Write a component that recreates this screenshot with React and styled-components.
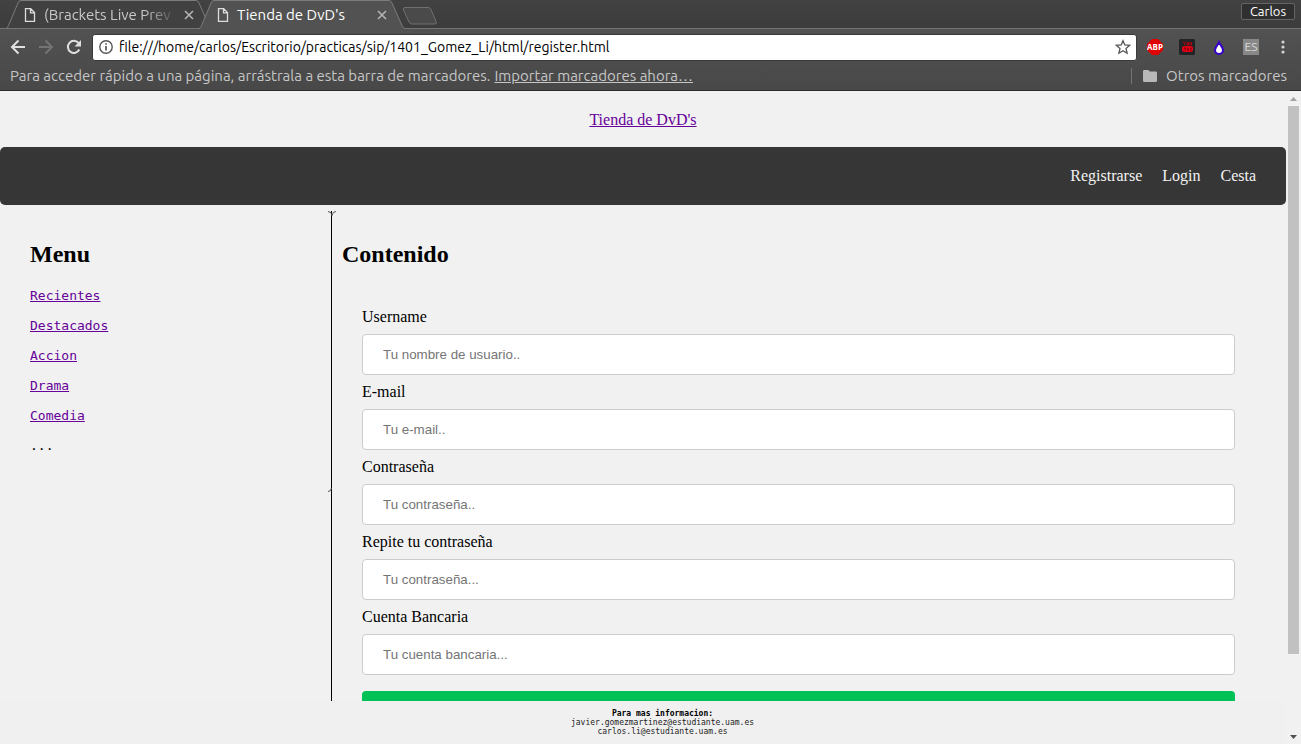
import React from "react";
import styled, { createGlobalStyle } from "styled-components";

const GlobalStyle = createGlobalStyle`
  * { box-sizing: border-box; }
  body { margin: 0; background: #f1f1f1; overflow: hidden; }
  button { border: 0; padding: 0; background: none; font: inherit; color: inherit; }
  svg { display: block; flex: none; }
`;

const uiFont = `"Ubuntu", "Noto Sans", "Open Sans", sans-serif`;
const serif = `"Liberation Serif", "Times New Roman", serif`;
const mono = `"DejaVu Sans Mono", monospace`;

const Window = styled.div`
  display: flex;
  flex-direction: column;
  height: 100vh;
`;

const Chrome = styled.header`
  flex: none;
  font-family: ${uiFont};
  font-size: 15px;
  color: #c6c6c6;
  border-bottom: 1px solid #2e2a2e;
`;

const TabStrip = styled.div`
  display: flex;
  align-items: flex-start;
  height: 29px;
  padding-left: 6px;
  background: linear-gradient(#424242, #3c3c3c);
  border-bottom: 1px solid #747474;
`;

const Tab = styled.div`
  position: relative;
  z-index: ${(p) => (p.$active ? 1 : 0)};
  display: flex;
  align-items: center;
  width: 206px;
  height: 29px;
  margin-right: -13px;
  padding: 0 16px 0 18px;
  color: ${(p) => (p.$active ? "#ffffff" : "#c9c9c9")};
`;

const TabShape = styled.svg`
  position: absolute;
  inset: 0;
  width: 100%;
  height: 100%;
  z-index: -1;
`;

const TabTitle = styled.span`
  flex: 1;
  margin: 0 4px 0 8px;
  overflow: hidden;
  white-space: nowrap;
  line-height: 28px;
  mask-image: ${(p) => (p.$fade ? "linear-gradient(90deg, #000 75%, transparent)" : "none")};
`;

const TabClose = styled.button`
  display: grid;
  place-items: center;
  width: 14px;
  height: 28px;
`;

const NewTab = styled.button`
  margin: 7px 0 0 10px;
`;

const UserButton = styled.button`
  margin: 3px 6px 0 auto;
  width: 54px;
  height: 17px;
  border: 1px solid #656565;
  border-radius: 2px;
  background: #303030;
  color: #ffffff;
  font-size: 13px;
  line-height: 15px;
`;

const Toolbar = styled.div`
  display: flex;
  align-items: center;
  height: 36px;
  padding: 0 10px;
  background: linear-gradient(#525252, #4c4c4c);
`;

const ToolButton = styled.button`
  display: grid;
  place-items: center;
  width: 16px;
  height: 24px;
  margin-right: ${(p) => p.$gap || 0}px;
`;

const Address = styled.div`
  display: flex;
  flex: 1;
  align-items: center;
  height: 27px;
  padding: 0 5px 0 6px;
  border: 1px solid #3a3a3a;
  border-radius: 3px;
  background: #ffffff;
`;

const AddressInput = styled.input`
  flex: 1;
  min-width: 0;
  padding: 0 6px;
  border: 0;
  outline: 0;
  background: none;
  color: #000000;
  font-family: ${uiFont};
  font-size: 14px;
`;

const Extensions = styled.div`
  display: flex;
  align-items: center;
  gap: 16px;
  padding-left: 10px;
`;

const LanguageBadge = styled.button`
  width: 16px;
  height: 16px;
  background: #888888;
  color: #d8d8d8;
  font-size: 12px;
  line-height: 16px;
`;

const Bookmarks = styled.div`
  display: flex;
  align-items: center;
  height: 25px;
  padding: 0 14px 4px 10px;
  background: linear-gradient(#4c4c4c, #484848);
  white-space: nowrap;
`;

const ImportLink = styled.a`
  margin-left: 4px;
  color: inherit;
`;

const OtherBookmarks = styled.button`
  display: flex;
  align-items: center;
  gap: 9px;
  margin-left: auto;
  padding-left: 11px;
  border-left: 1px solid #747474;
  line-height: 16px;
`;

const Viewport = styled.div`
  display: flex;
  flex: 1;
  min-height: 0;
`;

const Page = styled.div`
  display: flex;
  flex-direction: column;
  flex: 1;
  min-width: 0;
  background: #f1f1f1;
  color: #000000;
  font-family: ${serif};
  font-size: 16px;
  line-height: 18px;
`;

const Content = styled.div`
  flex: 1;
  min-height: 0;
  overflow: hidden;
`;

const SiteTitle = styled.div`
  padding: 20px 0 18px;
  text-align: center;
`;

const VisitedLink = styled.a`
  color: #660099;
`;

const Nav = styled.nav`
  display: flex;
  justify-content: flex-end;
  gap: 20px;
  padding: 20px 30px;
  border-radius: 5px;
  background: #363636;
`;

const NavLink = styled.a`
  color: #f2f2f2;
  text-decoration: none;
`;

const Columns = styled.div`
  display: flex;
  padding-top: 6px;
`;

const Sidebar = styled.aside`
  position: relative;
  width: 331px;
  height: 281px;
  padding: 30px;
`;

const CornerMark = styled.svg`
  position: absolute;
  right: -5px;
  ${(p) => (p.$bottom ? "bottom: 0;" : "top: 0;")}
`;

const Main = styled.main`
  flex: 1;
  padding: 30px 51px 30px 10px;
  border-left: 1px solid #000000;
`;

const Heading = styled.h2`
  margin: 0;
  font-size: 24px;
  line-height: 27px;
`;

const MenuList = styled.ul`
  margin: 13px 0 0;
  padding: 0;
  list-style: none;
  font-family: ${mono};
  font-size: 13px;
  line-height: 30px;
`;

const Form = styled.form`
  padding: 40px 0 20px 20px;
`;

const Label = styled.label`
  display: block;
`;

const Field = styled.input`
  display: block;
  width: 100%;
  height: 41px;
  margin: 8px 0;
  padding: 12px 20px;
  border: 1px solid #cccccc;
  border-radius: 4px;
  background: #ffffff;
  font-family: "Liberation Sans", Arial, sans-serif;
  &::placeholder { color: #757575; }
`;

const Submit = styled.button`
  display: block;
  width: 100%;
  height: 46px;
  margin: 16px 0 8px;
  border-radius: 4px;
  background: #00c155;
  color: #ffffff;
`;

const Footer = styled.footer`
  flex: none;
  padding: 8px 0 8px 39px;
  background: #f0f0f0;
  font-family: ${mono};
  font-size: 8px;
  line-height: 9px;
  text-align: center;
`;

const FooterLine = styled.div`
  font-weight: ${(p) => (p.$strong ? 700 : 400)};
  color: ${(p) => (p.$strong ? "#000000" : "#222222")};
`;

const Scrollbar = styled.div`
  display: flex;
  flex-direction: column;
  align-items: center;
  flex: none;
  width: 15px;
  background: #f1f1f1;
`;

const ScrollButton = styled.button`
  display: grid;
  place-items: center;
  width: 15px;
  height: 15px;
`;

const ScrollTrack = styled.div`
  flex: 1;
  width: 11px;
`;

const ScrollThumb = styled.div`
  height: 88%;
  background: #c1c1c1;
`;

const fields = [
  { id: "username", label: "Username", hint: "Tu nombre de usuario..", type: "text" },
  { id: "email", label: "E-mail", hint: "Tu e-mail..", type: "email" },
  { id: "password", label: "Contraseña", hint: "Tu contraseña..", type: "password" },
  { id: "repeat", label: "Repite tu contraseña", hint: "Tu contraseña...", type: "password" },
  { id: "account", label: "Cuenta Bancaria", hint: "Tu cuenta bancaria...", type: "text" },
];

const menu = ["Recientes", "Destacados", "Accion", "Drama", "Comedia"];

function PageIcon() {
  return (
    <svg width="12" height="14" viewBox="0 0 12 14" fill="none" stroke="#dddddd" strokeWidth="1.3">
      <path d="M1.5.7h5.2l3.8 3.9v8.7h-9zM6.5.7v4.1h4" />
    </svg>
  );
}

function BrowserTab({ title, active }) {
  return (
    <Tab $active={active}>
      <TabShape viewBox="0 0 206 29" preserveAspectRatio="none">
        <path
          d="M0 28.5Q1.5 28 2.5 25.500L12 3Q13 .5 15 .5H190Q192 .5 193 3L203 25.500Q204 28 206 28.500V29H0Z"
          fill={active ? "#525252" : "#414141"}
        />
        <path
          d="M0 28.500Q1.500 28 2.500 25.500L12 3Q13 .5 15 .5H190Q192 .5 193 3L203 25.500Q204 28 206 28.500"
          fill="none"
          stroke="#7c7c7c"
        />
        {!active && <path d="M0 28.500H206" stroke="#747474" />}
      </TabShape>
      <PageIcon />
      <TabTitle $fade={!active}>{title}</TabTitle>
      <TabClose aria-label="Cerrar pestaña">
        <svg width="10" height="10" viewBox="0 0 10 10" stroke="#b4b4b4" strokeWidth="1.6">
          <path d="M1 1l8 8M9 1L1 9" />
        </svg>
      </TabClose>
    </Tab>
  );
}

function BrowserChrome() {
  return (
    <Chrome>
      <TabStrip>
        <BrowserTab title="(Brackets Live Prev" />
        <BrowserTab title="Tienda de DvD's" active />
        <NewTab aria-label="Nueva pestaña">
          <svg width="36" height="18" viewBox="0 0 36 18" fill="#4a4a4a" stroke="#707070">
            <path d="M3 .5H26Q28 .5 29 2.500L34 14.500Q35 17 33 17H10Q8 17 7 15L1.500 3Q.8 .5 3 .5Z" />
          </svg>
        </NewTab>
        <UserButton>Carlos</UserButton>
      </TabStrip>
      <Toolbar>
        <ToolButton $gap={12} aria-label="Atrás">
          <svg width="16" height="16" viewBox="0 0 16 16" fill="none" stroke="#e0e0e0" strokeWidth="2">
            <path d="M15 8H2.500M8.500 1.500L2 8l6.500 6.500" />
          </svg>
        </ToolButton>
        <ToolButton $gap={12} aria-label="Adelante">
          <svg width="16" height="16" viewBox="0 0 16 16" fill="none" stroke="#747474" strokeWidth="2">
            <path d="M1 8h12.500M7.500 1.500L14 8l-6.500 6.500" />
          </svg>
        </ToolButton>
        <ToolButton $gap={10} aria-label="Recargar">
          <svg width="16" height="16" viewBox="0 0 16 16">
            <path d="M13.300 10.500A6 6 0 1 1 12.500 4" fill="none" stroke="#e0e0e0" strokeWidth="2" />
            <path d="M15 1v6.500H8.500z" fill="#e0e0e0" />
          </svg>
        </ToolButton>
        <Address>
          <svg width="14" height="14" viewBox="0 0 14 14" fill="none" stroke="#555555" strokeWidth="1.4">
            <circle cx="7" cy="7" r="6.200" />
            <path d="M7 6v4.500M7 3.200v1.600" strokeWidth="1.700" />
          </svg>
          <AddressInput
            aria-label="Dirección"
            defaultValue="file:///home/carlos/Escritorio/practicas/sip/1401_Gomez_Li/html/register.html"
          />
          <ToolButton aria-label="Añadir a marcadores">
            <svg width="16" height="16" viewBox="0 0 16 16" fill="none" stroke="#555555" strokeWidth="1.3">
              <path d="M8 1.700l1.800 4.300 4.800.4-3.600 3.100 1.100 4.700L8 11.700l-4.100 2.500L5 9.500 1.400 6.400 6.200 6z" />
            </svg>
          </ToolButton>
        </Address>
        <Extensions>
          <ToolButton aria-label="Bloqueador de anuncios">
            <svg width="16" height="16" viewBox="0 0 16 16">
              <path d="M5 0h6l5 5v6l-5 5H5l-5-5V5z" fill="#e00000" />
              <text x="8" y="11" textAnchor="middle" fill="#ffffff" fontFamily="Open Sans, sans-serif" fontWeight="700" fontSize="8">ABP</text>
            </svg>
          </ToolButton>
          <ToolButton aria-label="Vídeo">
            <svg width="16" height="16" viewBox="0 0 16 16">
              <rect width="16" height="16" rx="1.500" fill="#202426" />
              <path d="M4 2.500l1.500 2v1.500M7 2.500L5.500 4.500M8 3.500h1.500V6H8zM11 3v3h1.500V3" fill="none" stroke="#b00010" />
              <rect x="3" y="7" width="11" height="6" rx="2" fill="#df0015" />
              <path d="M5 9h2M6 9v2.500M8.500 9v2h1.500M11 9.500h1.500M11 11h1.500" stroke="#76000a" strokeWidth=".8" />
            </svg>
          </ToolButton>
          <ToolButton aria-label="Gota">
            <svg width="16" height="16" viewBox="0 0 16 16">
              <path d="M8 3.200C9.500 6.500 12 8.500 12 11a4 3.900 0 0 1-8 0c0-2.500 2.500-4.500 4-7.800z" fill="#ffffff" stroke="#3300cc" strokeWidth="2" />
            </svg>
          </ToolButton>
          <LanguageBadge>ES</LanguageBadge>
          <ToolButton aria-label="Menú del navegador">
            <svg width="4" height="14" viewBox="0 0 4 14" fill="#d4d4d4">
              <circle cx="2" cy="2" r="1.600" />
              <circle cx="2" cy="7" r="1.600" />
              <circle cx="2" cy="12" r="1.600" />
            </svg>
          </ToolButton>
        </Extensions>
      </Toolbar>
      <Bookmarks>
        <span>Para acceder rápido a una página, arrástrala a esta barra de marcadores.</span>
        <ImportLink href="#importar">Importar marcadores ahora…</ImportLink>
        <OtherBookmarks>
          <svg width="14" height="12" viewBox="0 0 14 12" fill="#b8b8b8">
            <path d="M1.300 0h4l1.500 1.600h5.900Q14 1.600 14 3v7.700Q14 12 12.700 12H1.300Q0 12 0 10.700V1.300Q0 0 1.300 0z" />
          </svg>
          Otros marcadores
        </OtherBookmarks>
      </Bookmarks>
    </Chrome>
  );
}

export default function App() {
  return (
    <Window>
      <GlobalStyle />
      <BrowserChrome />
      <Viewport>
        <Page>
          <Content>
            <SiteTitle>
              <VisitedLink href="#inicio">Tienda de DvD's</VisitedLink>
            </SiteTitle>
            <Nav>
              <NavLink href="#registrarse">Registrarse</NavLink>
              <NavLink href="#login">Login</NavLink>
              <NavLink href="#cesta">Cesta</NavLink>
            </Nav>
            <Columns>
              <Sidebar>
                <Heading>Menu</Heading>
                <MenuList>
                  {menu.map((item) => (
                    <li key={item}>
                      <VisitedLink href={"#" + item.toLowerCase()}>{item}</VisitedLink>
                    </li>
                  ))}
                  <li>...</li>
                </MenuList>
                <CornerMark width="8" height="5" viewBox="0 0 8 5" fill="none" stroke="#555555">
                  <path d="M0 .5Q3.500 .5 4 4.500Q4.500 .5 8 .5" />
                </CornerMark>
                <CornerMark $bottom width="8" height="5" viewBox="0 0 8 5" fill="none" stroke="#555555">
                  <path d="M0 4.500Q3 4.500 3.500 1" />
                </CornerMark>
              </Sidebar>
              <Main>
                <Heading>Contenido</Heading>
                <Form>
                  {fields.map((f) => (
                    <React.Fragment key={f.id}>
                      <Label htmlFor={f.id}>{f.label}</Label>
                      <Field id={f.id} type={f.type} placeholder={f.hint} />
                    </React.Fragment>
                  ))}
                  <Submit type="button" aria-label="Registrarse" />
                </Form>
              </Main>
            </Columns>
          </Content>
          <Footer>
            <FooterLine $strong>Para mas informacion:</FooterLine>
            <FooterLine>javier.gomezmartinez@estudiante.uam.es</FooterLine>
            <FooterLine>carlos.li@estudiante.uam.es</FooterLine>
          </Footer>
        </Page>
        <Scrollbar>
          <ScrollButton aria-label="Subir">
            <svg width="7" height="4" viewBox="0 0 7 4" fill="#a3a3a3"><path d="M0 4L3.500 0 7 4z" /></svg>
          </ScrollButton>
          <ScrollTrack>
            <ScrollThumb />
          </ScrollTrack>
          <ScrollButton aria-label="Bajar">
            <svg width="7" height="4" viewBox="0 0 7 4" fill="#505050"><path d="M0 0h7L3.500 4z" /></svg>
          </ScrollButton>
        </Scrollbar>
      </Viewport>
    </Window>
  );
}
